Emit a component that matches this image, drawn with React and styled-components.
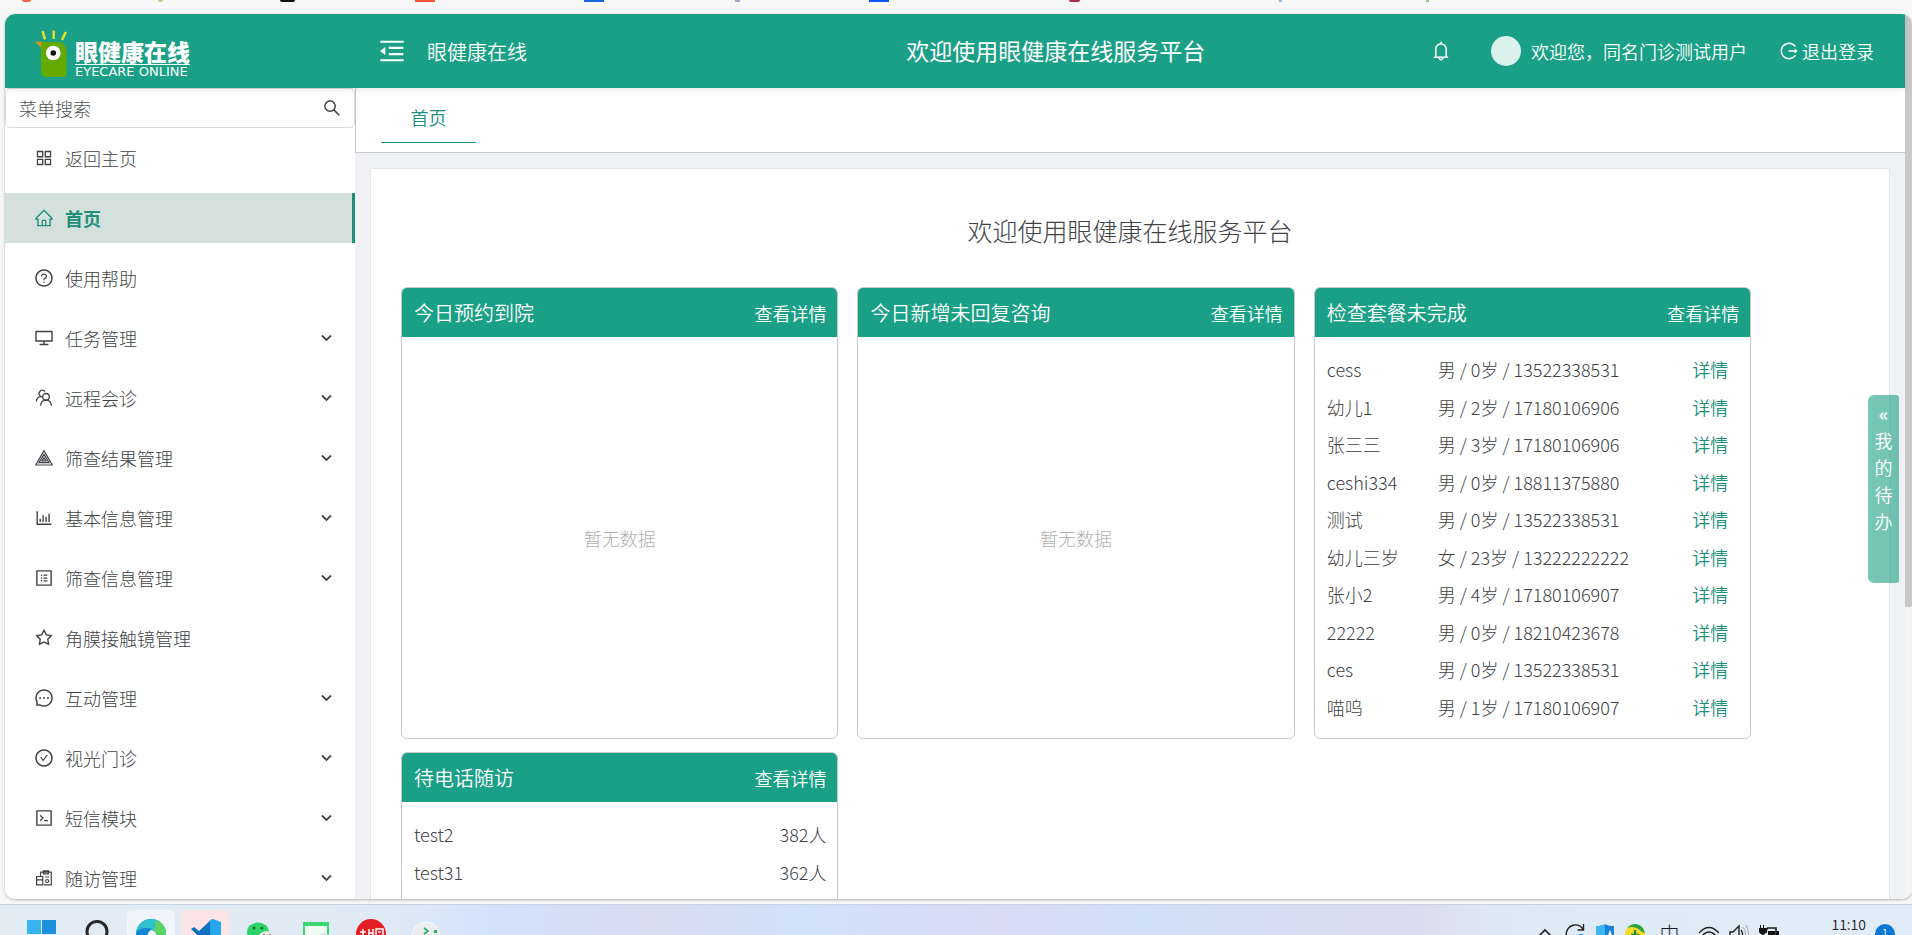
import React from "react";
import styled, { createGlobalStyle, css } from "styled-components";
import {
  AiOutlineAppstore,
  AiOutlineBarChart,
  AiOutlineBell,
  AiOutlineCheckCircle,
  AiOutlineCode,
  AiOutlineDesktop,
  AiOutlineHome,
  AiOutlineLogout,
  AiOutlineMenuFold,
  AiOutlineMessage,
  AiOutlineProfile,
  AiOutlineQuestionCircle,
  AiOutlineSearch,
  AiOutlineStar,
} from "react-icons/ai";

const GREEN = "#1aa086";
const LINK = "#20907a";
const TEXT = "#404246";

const GlobalStyle = createGlobalStyle`
  *, *::before, *::after { box-sizing: border-box; }
  body {
    margin: 0;
    font-family: "Noto Sans CJK SC", sans-serif;
    font-size: 18px;
    font-weight: 300;
    color: ${TEXT};
    background: #f7f7f7;
  }
  button, input { font: inherit; color: inherit; }
  button { border: 0; padding: 0; background: none; cursor: pointer; }
  a { color: inherit; text-decoration: none; }
  svg { display: block; flex: none; }
`;

const Desktop = styled.div`
  display: flex;
  flex-direction: column;
  height: 100vh;
  overflow: hidden;
`;

/* Browser bookmarks bar, of which only the lower edge shows */
const Bookmarks = styled.div`
  display: flex;
  flex: none;
  height: 14px;
  padding-left: 22px;
  overflow: hidden;
`;

const Bookmark = styled.span`
  flex: none;
  width: ${(p) => p.$slot}px;

  &::before {
    content: "";
    display: block;
    width: ${(p) => p.$size}px;
    height: 2px;
    background: ${(p) => p.$color};
    border-radius: ${(p) => (p.$round ? "0 0 5px 5px" : "0")};
  }
`;

const Browser = styled.div`
  position: relative;
  display: flex;
  flex: 1;
  min-height: 0;
  margin: 0 0 5px 5px;
  overflow: hidden;
  border-radius: 10px;
  background: #fff;
  box-shadow: 0 1px 3px rgba(0, 0, 0, 0.28);
`;

const Page = styled.div`
  display: flex;
  flex: 1;
  flex-direction: column;
  min-width: 0;
`;

const ScrollTrack = styled.div`
  flex: none;
  width: 7px;
  background: #f4f4f5;
`;

const ScrollThumb = styled.div`
  height: 67%;
  border-radius: 0 8px 2px 2px;
  background: #c9c9c9;
`;

const Header = styled.header`
  position: relative;
  display: grid;
  flex: none;
  grid-template-columns: 350px 551fr 998fr;
  align-items: center;
  height: 74px;
  color: #fff;
  background: ${GREEN};
  box-shadow: 0 1px 6px rgba(0, 0, 0, 0.12);
`;

const Logo = styled.a`
  display: flex;
  gap: 8px;
  align-items: flex-end;
  padding: 5px 0 0 30px;
`;

const LogoName = styled.span`
  display: flex;
  flex-direction: column;
`;

const LogoTitle = styled.strong`
  align-self: flex-start;
  border-bottom: 1px solid #fff;
  font-size: 23px;
  font-weight: 900;
  line-height: 26px;
`;

const LogoSub = styled.span`
  padding-top: 1px;
  font-family: "DejaVu Sans", sans-serif;
  font-size: 13px;
  font-weight: 400;
  line-height: 12px;
`;

const HeaderLeft = styled.div`
  display: flex;
  gap: 20px;
  align-items: center;
  padding-left: 22px;
  font-size: 20px;
  font-weight: 350;
`;

const HeaderMain = styled.div`
  display: flex;
  align-items: center;
  justify-content: space-between;
  padding-right: 31px;
`;

const HeaderTitle = styled.span`
  font-size: 23px;
  font-weight: 400;
  line-height: 34px;
  padding-bottom: 2px;
`;

const HeaderTools = styled.div`
  display: flex;
  align-items: center;
  font-weight: 350;
`;

const User = styled.span`
  display: flex;
  gap: 10px;
  align-items: center;
  margin: 0 32px 0 39px;
`;

const Avatar = styled.span`
  width: 30px;
  height: 30px;
  border-radius: 50%;
  background: #daf1ec;
`;

const ToolButton = styled.button`
  display: flex;
  gap: 3px;
  align-items: center;
`;

const Body = styled.div`
  display: flex;
  flex: 1;
  min-height: 0;
`;

const Sidebar = styled.aside`
  flex: none;
  width: 350px;
  overflow: hidden;
  background: #fff;
  box-shadow: 1px 0 8px rgba(0, 21, 41, 0.12);
`;

const SearchBox = styled.label`
  display: flex;
  align-items: center;
  height: 40px;
  padding: 0 12px 0 13px;
  border: 1px solid #d9d9d9;
  border-radius: 5px;
`;

const SearchInput = styled.input`
  flex: 1;
  min-width: 0;
  padding: 0;
  border: 0;
  outline: 0;
  background: none;

  &::placeholder { color: #505256; opacity: 1; }
`;

const Menu = styled.ul`
  margin: 0;
  padding: 0;
  list-style: none;
`;

const MenuItem = styled.li`
  padding: 5px 0;
`;

const MenuLink = styled.a`
  display: flex;
  gap: 11px;
  align-items: center;
  height: 50px;
  padding: 0 23px 0 29px;

  ${(p) =>
    p.$active &&
    css`
      border-right: 3px solid ${LINK};
      color: ${LINK};
      background: #d4e0db;
      font-weight: 700;
    `}
`;

const MenuText = styled.span`
  flex: 1;
`;

const Main = styled.main`
  display: flex;
  flex: 1;
  flex-direction: column;
  min-width: 0;
  background: #f0f1f5;
`;

const Tabs = styled.nav`
  display: flex;
  flex: none;
  height: 65px;
  padding: 0 25px;
  border-bottom: 1px solid #c8c9cc;
  border-left: 1px solid #c8c9cc;
  background: #fff;
`;

const Tab = styled.a`
  width: 95px;
  height: 55px;
  border-bottom: 1px solid ${LINK};
  color: ${LINK};
  font-weight: 350;
  line-height: 58px;
  text-align: center;
`;

const Panel = styled.section`
  flex: 1;
  min-height: 0;
  margin: 15px 15px 0 15px;
  padding: 43px 30px 0;
  overflow: hidden;
  border: 1px solid #e4e5e8;
  border-bottom: 0;
  border-radius: 2px 2px 0 0;
  background: #fff;
`;

const PanelTitle = styled.h1`
  margin: 0 0 39px;
  font-size: 25px;
  font-weight: 300;
  line-height: 36px;
  text-align: center;
`;

const Cards = styled.div`
  display: grid;
  grid-template-columns: repeat(3, 30%);
  gap: 13px 19px;
  align-items: start;
`;

const Card = styled.article`
  display: flex;
  flex-direction: column;
  height: 452px;
  overflow: hidden;
  border: 1px solid #c9cacc;
  border-radius: 6px;
`;

const CardHead = styled.header`
  display: flex;
  flex: none;
  align-items: center;
  justify-content: space-between;
  height: 49px;
  padding: 0 11px 0 12px;
  color: #fff;
  background: ${GREEN};
`;

const CardTitle = styled.h2`
  margin: 0;
  font-size: 20px;
  font-weight: 350;
`;

const CardMore = styled.a`
  font-weight: 350;
`;

const Empty = styled.p`
  display: flex;
  flex: 1;
  align-items: center;
  justify-content: center;
  margin: 0;
  color: #b0b0b2;
`;

const DataTable = styled.table`
  width: 100%;
  margin-top: 13px;
  border-collapse: collapse;
  table-layout: fixed;
`;

const DataRow = styled.tr`
  height: 38px;

  &:nth-child(even) { height: 37px; }
`;

const Cell = styled.td`
  width: ${(p) => p.$width || "auto"};
  padding: ${(p) => (p.$end ? "0 11px 0 0" : "0 0 0 12px")};
  text-align: ${(p) => (p.$end ? "right" : "left")};
  line-height: 24px;
`;

const ActionCell = styled(Cell)`
  padding: 0 22px 0 0;
  color: ${LINK};
  font-weight: 350;
  text-align: right;
`;

/* Drawer handle that floats over the right edge of the page */
const TodoHandle = styled.button`
  position: absolute;
  top: 381px;
  right: 13px;
  display: flex;
  flex-direction: column;
  align-items: center;
  width: 31px;
  height: 188px;
  padding-top: 5px;
  border-radius: 6px 3px 3px 6px;
  color: #fff;
  background: rgba(26, 160, 134, 0.6);
  font-weight: 350;
  line-height: 27px;
`;

const TodoArrow = styled.span`
  font-weight: 700;
`;

const Taskbar = styled.footer`
  display: flex;
  flex: none;
  align-items: flex-start;
  justify-content: space-between;
  height: 31px;
  padding: 0 17px;
  overflow: hidden;
  border-top: 1px solid #c9d5e2;
  background: linear-gradient(90deg, #e2ecf5 0, #e0eaf6 20%, #d2e2fa 26%, #d7dcf0 34%, #d1e2f9 42%, #d8dcf5 52%, #d0e0f6 60%, #d9dbee 73%, #deebf7 80%, #e0ecf7 100%);
`;

const TaskApps = styled.div`
  display: flex;
  gap: 7px;
  padding-top: 5px;
`;

const TaskApp = styled.button`
  display: flex;
  justify-content: center;
  width: 48px;
  height: 44px;
  padding-top: ${(p) => p.$top}px;
  border-radius: 5px;
  background: ${(p) => p.$tile || "none"};
`;

const Tray = styled.div`
  display: flex;
  align-items: flex-start;
  color: #1d1d1f;
`;

const TrayIcon = styled.button`
  width: 20px;
  margin-right: ${(p) => p.$gap}px;
  padding-top: 19px;
`;

const Ime = styled.button`
  margin-right: 20px;
  padding-top: 17px;
  font-size: 20px;
  line-height: 24px;
`;

const Clock = styled.time`
  margin-right: 9px;
  padding-top: 9px;
  font-size: 14px;
  font-weight: 350;
  line-height: 20px;
`;

const Badge = styled.span`
  width: 20px;
  height: 20px;
  margin-top: 19px;
  border-radius: 50%;
  color: #fff;
  background: #0a78d4;
  font-size: 13px;
  line-height: 19px;
  text-align: center;
`;

const LogoMark = () => (
  <svg width="32" height="48" viewBox="0 0 32 48" aria-hidden="true">
    <g stroke="#e9e22c" strokeWidth="2.4">
      <path d="M7.6 1.2 10 9.5M18.7 .5V9M30.8 2 27 10" />
    </g>
    <path d="M0 11.7h9v9z" fill="#d8921c" />
    <path d="M6 14q0-2 2-2h14q9.500 0 9.500 9.500V45q0 2-2 2H12q-6 0-6-6z" fill="#64a900" />
    <circle cx="18.300" cy="23" r="7.300" fill="#fff" />
    <circle cx="18.300" cy="23" r="2.800" fill="#111" />
  </svg>
);

const Caret = () => (
  <svg width="11" height="8" viewBox="0 0 11 8" fill="none" stroke="#46484c" strokeWidth="1.800" aria-hidden="true">
    <path d="m1 1.500 4.500 4.500L10 1.500" />
  </svg>
);

const ConsultIcon = () => (
  <svg width="20" height="20" viewBox="-1 -1 20 20" fill="none" stroke="currentColor" strokeWidth="1.300" aria-hidden="true">
    <circle cx="11" cy="7.800" r="3.300" />
    <path d="M5.600 16.700c.2-3.300 2.400-5.600 5.400-5.600s5.200 2.300 5.500 5.600" />
    <path d="M10 2.600C8.800.7 5.900.7 4.700 2.700c-1 1.700-.5 3.600 1 4.600C3.200 7.800 1.500 9.800 1.300 12.500M5.700 7.300l1.600.8" />
  </svg>
);

const TriangleIcon = () => (
  <svg width="20" height="20" viewBox="-1 -1 20 20" fill="none" stroke="currentColor" strokeWidth="1.200" aria-hidden="true">
    <path d="M9 1.800 17.200 16H.8zM9 5.400l5 8.300H4zM9 8.700l2 3.200H7z" />
  </svg>
);

const FollowIcon = () => (
  <svg width="20" height="20" viewBox="-1 -1 20 20" fill="none" stroke="currentColor" strokeWidth="1.200" aria-hidden="true">
    <path d="M5.500 7V3.200h10.800v12.700H9M8.300 4.800V1.900h5.200v2.900z" />
    <path d="M1.600 7.500h6.200v8.400H1.600zM1.600 10.800h6.200M10 8h4" />
    <circle cx="12.200" cy="12" r="1.500" />
  </svg>
);

const WindowsIcon = () => (
  <svg width="29" height="29" viewBox="0 0 29 29" aria-hidden="true">
    <path d="M0 0h14v14H0zM0 15h14v14H0z" fill="#36b4f2" />
    <path d="M15 0h14v14H15zM15 15h14v14H15z" fill="#1b90dc" />
  </svg>
);

const FindIcon = () => (
  <svg width="28" height="28" viewBox="-2 0 28 28" fill="none" stroke="#29292c" strokeWidth="3" aria-hidden="true">
    <circle cx="13" cy="11.500" r="10" />
    <path d="m20 19 6 7" />
  </svg>
);

const EdgeIcon = () => (
  <svg width="30" height="30" viewBox="0 0 30 30" aria-hidden="true">
    <circle cx="15" cy="15" r="15" fill="#1586d6" />
    <path d="M0 13C2 5 8 0 15 0c9 0 15 7 15 14 0 5-4 8-9 7 0-6-4-12-10-12C6 9 2 11 0 13z" fill="#2fc0cf" />
    <path d="M20 1c6 2 10 7 10 13 0 5-4 8-9 7 0-4-1-7-3-9z" fill="#6bd64c" opacity=".8" />
    <path d="M11 20c0-5 2-9 5-9 3 1 5 5 5 9z" fill="#eff5fc" />
  </svg>
);

const CodeIcon = () => (
  <svg width="30" height="30" viewBox="0 0 30 30" aria-hidden="true">
    <path d="M21 0 8 12 3 8 0 10l19 18V9z" fill="#0d72bd" />
    <path d="m19 1 3-1 8 3v24l-8 3-3-2z" fill="#27a5ef" />
  </svg>
);

const WechatIcon = () => (
  <svg width="30" height="28" viewBox="0 0 30 28" aria-hidden="true">
    <ellipse cx="12" cy="12" rx="11" ry="9.500" fill="#2bd467" />
    <circle cx="8" cy="8" r="1.500" fill="#126b35" />
    <circle cx="16" cy="8" r="1.500" fill="#126b35" />
    <ellipse cx="21" cy="19" rx="9" ry="8" fill="#e7e7e7" />
    <circle cx="18" cy="15" r="1" fill="#777" />
    <circle cx="24" cy="15" r="1" fill="#777" />
  </svg>
);

const MonitorIcon = () => (
  <svg width="28" height="26" viewBox="0 0 28 26" aria-hidden="true">
    <path d="M2 1h24v20H2z" fill="#effaf3" stroke="#3bd571" strokeWidth="2" />
    <path d="M1 0h26v4H1z" fill="#3bd571" />
    <circle cx="22" cy="18" r="7" fill="#dfe3e5" />
  </svg>
);

const YoudaoIcon = () => (
  <svg width="30" height="30" viewBox="0 0 30 30" aria-hidden="true">
    <circle cx="15" cy="15" r="15" fill="#e51f23" />
    <path d="M4 13h6M7 10v9M3 18h8M13 10v9M17 10v9M13 14h4M20 19v-9h7v9M22 13h3" stroke="#fff" strokeWidth="1.500" fill="none" />
  </svg>
);

const TerminalIcon = () => (
  <svg width="30" height="30" viewBox="0 0 30 30" aria-hidden="true">
    <circle cx="15" cy="15" r="14" fill="#ececed" stroke="#f8f8f8" />
    <path d="m13 7 4 3-4 3" stroke="#1db466" strokeWidth="1.600" fill="none" />
    <path d="M23 9h3v3h-3z" fill="#1db466" />
  </svg>
);

const trayDrawings = {
  up: <path d="m4 12 6-6 6 6" fill="none" stroke="#222" strokeWidth="1.600" />,
  sync: (
    <>
      <path d="M1 11C2 0 13-2 18 5M18.500 0v6h-6" fill="none" stroke="#222" strokeWidth="1.400" />
      <circle cx="16" cy="14" r="4" fill="#1b83e0" />
    </>
  ),
  shield: (
    <>
      <path d="M1 2q6 0 9-2 3 2 9 2v10q0 7-9 8-9-1-9-8z" fill="#1a82d4" />
      <path d="M1 2q6 0 9-2v20q-9-1-9-8z" fill="#3fb5ef" />
      <path d="m15 6 3 8h-6z" fill="#fff" />
    </>
  ),
  guard: (
    <>
      <circle cx="10" cy="10" r="10" fill="#f5dc2a" />
      <path d="M2 4Q10-4 18 4l2 5q-4-1-5-3Q9 1 2 4z" fill="#28a343" />
      <path d="M10 6v10M6 11h8" stroke="#228c3a" strokeWidth="2.400" />
    </>
  ),
  wifi: <path d="M0 9Q10-2 20 9M3 12q7-8 14 0M6 15q4-5 8 0" fill="none" stroke="#222" strokeWidth="1.500" />,
  sound: (
    <>
      <path d="M1 8h3l6-6v16l-6-6H1z" fill="none" stroke="#222" strokeWidth="1.400" />
      <path d="M12 6q3 4 0 8" fill="none" stroke="#222" strokeWidth="1.300" />
      <path d="M14 3q5 7 0 14M17 1q5 9 0 18" fill="none" stroke="#aab" />
    </>
  ),
  power: (
    <>
      <path d="M8 4h9v12H6v-5M8 4 7 9" fill="none" stroke="#1b1b1d" strokeWidth="1.600" />
      <path d="M9 7h7v8H9zM17 7h3v6h-3zM0 4h7v4q-1 3-3 3T0 8zM1 1h1v3H1zM4 1h1v3H4z" fill="#111" />
    </>
  ),
};

const tray = [
  { id: "up", label: "显示隐藏的图标", gap: 10 },
  { id: "sync", label: "同步", gap: 10 },
  { id: "shield", label: "安全中心", gap: 10 },
  { id: "guard", label: "安全卫士", gap: 14 },
];

const trayEnd = [
  { id: "wifi", label: "网络", gap: 10 },
  { id: "sound", label: "音量", gap: 10 },
  { id: "power", label: "电源", gap: 52 },
];

const bookmarks = [
  { slot: 136, size: 9, color: "#f9693a", round: true },
  { slot: 122, size: 5, color: "#b5cf8b", round: true },
  { slot: 135, size: 15, color: "#111", round: true },
  { slot: 169, size: 20, color: "#fb5432" },
  { slot: 151, size: 20, color: "#1266d8" },
  { slot: 134, size: 5, color: "#a8a8cf" },
  { slot: 200, size: 20, color: "#0b55f5" },
  { slot: 210, size: 11, color: "#a92b49", round: true },
  { slot: 147, size: 3, color: "#8cbce8" },
  { slot: 10, size: 3, color: "#8fcb80" },
];

const menu = [
  { text: "返回主页", Icon: AiOutlineAppstore },
  { text: "首页", Icon: AiOutlineHome, active: true },
  { text: "使用帮助", Icon: AiOutlineQuestionCircle },
  { text: "任务管理", Icon: AiOutlineDesktop, sub: true },
  { text: "远程会诊", Icon: ConsultIcon, sub: true },
  { text: "筛查结果管理", Icon: TriangleIcon, sub: true },
  { text: "基本信息管理", Icon: AiOutlineBarChart, sub: true },
  { text: "筛查信息管理", Icon: AiOutlineProfile, sub: true },
  { text: "角膜接触镜管理", Icon: AiOutlineStar },
  { text: "互动管理", Icon: AiOutlineMessage, sub: true },
  { text: "视光门诊", Icon: AiOutlineCheckCircle, sub: true },
  { text: "短信模块", Icon: AiOutlineCode, sub: true },
  { text: "随访管理", Icon: FollowIcon, sub: true },
];

const exams = [
  ["cess", "男 / 0岁 / 13522338531"],
  ["幼儿1", "男 / 2岁 / 17180106906"],
  ["张三三", "男 / 3岁 / 17180106906"],
  ["ceshi334", "男 / 0岁 / 18811375880"],
  ["测试", "男 / 0岁 / 13522338531"],
  ["幼儿三岁", "女 / 23岁 / 13222222222"],
  ["张小2", "男 / 4岁 / 17180106907"],
  ["22222", "男 / 0岁 / 18210423678"],
  ["ces", "男 / 0岁 / 13522338531"],
  ["喵呜", "男 / 1岁 / 17180106907"],
];

const calls = [
  ["test2", "382人"],
  ["test31", "362人"],
];

const apps = [
  { label: "开始", Icon: WindowsIcon, top: 10 },
  { label: "搜索", Icon: FindIcon, top: 10 },
  { label: "Edge", Icon: EdgeIcon, top: 9, tile: "#f0f5fc" },
  { label: "VS Code", Icon: CodeIcon, top: 9, tile: "#fbe3e6" },
  { label: "微信", Icon: WechatIcon, top: 10 },
  { label: "终端", Icon: MonitorIcon, top: 12 },
  { label: "词典", Icon: YoudaoIcon, top: 9 },
  { label: "命令行", Icon: TerminalIcon, top: 11 },
];

function InfoCard({ title, children }) {
  return (
    <Card>
      <CardHead>
        <CardTitle>{title}</CardTitle>
        <CardMore href="#">查看详情</CardMore>
      </CardHead>
      {children}
    </Card>
  );
}

function TrayItem({ id, label, gap }) {
  return (
    <TrayIcon type="button" aria-label={label} $gap={gap}>
      <svg width="20" height="20" viewBox="0 0 20 20">{trayDrawings[id]}</svg>
    </TrayIcon>
  );
}

export default function App() {
  return (
    <Desktop>
      <GlobalStyle />
      <Bookmarks aria-hidden="true">
        {bookmarks.map((b, i) => (
          <Bookmark key={i} $slot={b.slot} $size={b.size} $color={b.color} $round={b.round} />
        ))}
      </Bookmarks>

      <Browser>
        <Page>
          <Header>
            <Logo href="#">
              <LogoMark />
              <LogoName>
                <LogoTitle>眼健康在线</LogoTitle>
                <LogoSub>EYECARE ONLINE</LogoSub>
              </LogoName>
            </Logo>
            <HeaderLeft>
              <ToolButton type="button" aria-label="收起菜单">
                <AiOutlineMenuFold size={30} />
              </ToolButton>
              <span>眼健康在线</span>
            </HeaderLeft>
            <HeaderMain>
              <HeaderTitle>欢迎使用眼健康在线服务平台</HeaderTitle>
              <HeaderTools>
                <ToolButton type="button" aria-label="消息">
                  <AiOutlineBell size={22} />
                </ToolButton>
                <User>
                  <Avatar />
                  <span>欢迎您，同名门诊测试用户</span>
                </User>
                <ToolButton type="button">
                  <AiOutlineLogout size={20} />
                  退出登录
                </ToolButton>
              </HeaderTools>
            </HeaderMain>
          </Header>

          <Body>
            <Sidebar>
              <SearchBox>
                <SearchInput type="text" placeholder="菜单搜索" aria-label="菜单搜索" />
                <AiOutlineSearch size={20} />
              </SearchBox>
              <Menu>
                {menu.map(({ text, Icon, active, sub }) => (
                  <MenuItem key={text}>
                    <MenuLink href="#" $active={active}>
                      <Icon size={20} />
                      <MenuText>{text}</MenuText>
                      {sub && <Caret />}
                    </MenuLink>
                  </MenuItem>
                ))}
              </Menu>
            </Sidebar>

            <Main>
              <Tabs>
                <Tab href="#">首页</Tab>
              </Tabs>
              <Panel>
                <PanelTitle>欢迎使用眼健康在线服务平台</PanelTitle>
                <Cards>
                  <InfoCard title="今日预约到院">
                    <Empty>暂无数据</Empty>
                  </InfoCard>
                  <InfoCard title="今日新增未回复咨询">
                    <Empty>暂无数据</Empty>
                  </InfoCard>
                  <InfoCard title="检查套餐未完成">
                    <DataTable>
                      <tbody>
                        {exams.map(([name, info]) => (
                          <DataRow key={name}>
                            <Cell $width="111px">{name}</Cell>
                            <Cell>{info}</Cell>
                            <ActionCell $width="80px">
                              <a href="#">详情</a>
                            </ActionCell>
                          </DataRow>
                        ))}
                      </tbody>
                    </DataTable>
                  </InfoCard>
                  <InfoCard title="待电话随访">
                    <DataTable>
                      <tbody>
                        {calls.map(([name, count]) => (
                          <DataRow key={name}>
                            <Cell>{name}</Cell>
                            <Cell $end>{count}</Cell>
                          </DataRow>
                        ))}
                      </tbody>
                    </DataTable>
                  </InfoCard>
                </Cards>
              </Panel>
            </Main>
          </Body>
        </Page>
        <ScrollTrack>
          <ScrollThumb />
        </ScrollTrack>
        <TodoHandle type="button">
          <TodoArrow>«</TodoArrow>
          <span>我</span>
          <span>的</span>
          <span>待</span>
          <span>办</span>
        </TodoHandle>
      </Browser>

      <Taskbar>
        <TaskApps>
          {apps.map(({ label, Icon, top, tile }) => (
            <TaskApp key={label} type="button" aria-label={label} $top={top} $tile={tile}>
              <Icon />
            </TaskApp>
          ))}
        </TaskApps>
        <Tray>
          {tray.map((t) => (
            <TrayItem key={t.id} {...t} />
          ))}
          <Ime type="button">中</Ime>
          {trayEnd.map((t) => (
            <TrayItem key={t.id} {...t} />
          ))}
          <Clock>11:10</Clock>
          <Badge>1</Badge>
        </Tray>
      </Taskbar>
    </Desktop>
  );
}
